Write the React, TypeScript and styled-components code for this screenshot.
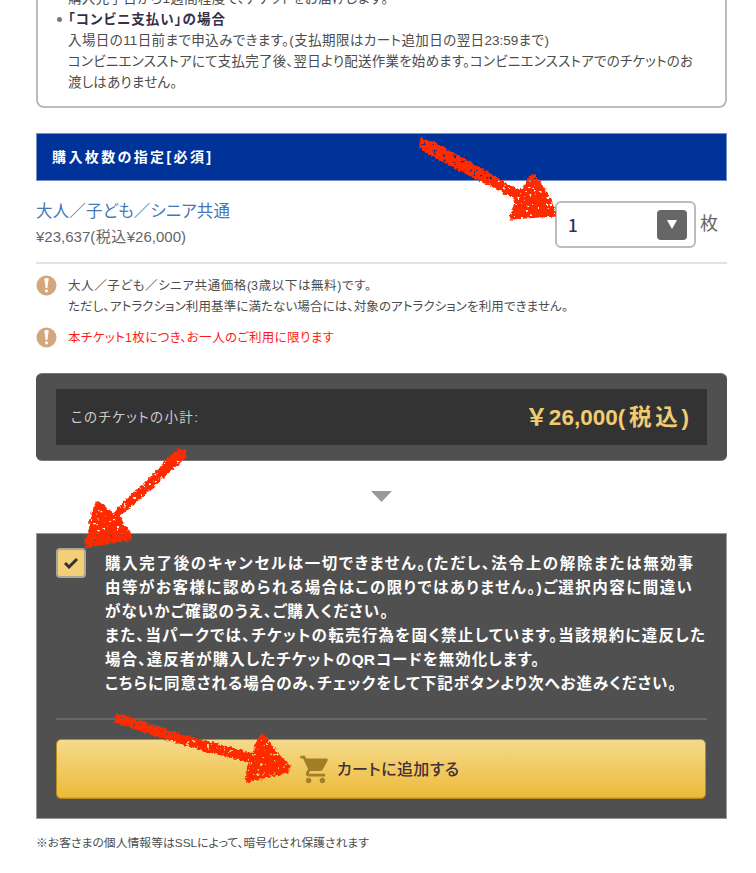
import React from 'react';
import styled, { createGlobalStyle, css } from 'styled-components';
import { MdShoppingCart } from 'react-icons/md';

const GlobalStyle = createGlobalStyle`
  *, *::before, *::after { box-sizing: border-box; }
  body {
    margin: 0;
    background: #fff;
    color: #4c4c4c;
    font-family: "Liberation Sans", "Noto Sans CJK JP", sans-serif;
    font-size: 13.5px;
    line-height: 21px;
  }
`;

const Page = styled.main`
  position: relative;
  width: 756px;
  height: 873px;
  padding: 0 29px 0 36px;
  overflow: hidden;
`;

/* One typeset line, spread evenly over its measure. */
const Line = styled.span<{ $w: number; $bold?: boolean }>`
  display: block;
  width: ${(p) => p.$w}px;
  white-space: nowrap;
  text-align: justify;
  text-align-last: justify;
  font-feature-settings: 'palt' 1;
  ${(p) => p.$bold && css`font-weight: 700;`}
`;

const PaymentBox = styled.section`
  height: 120px;
  margin-top: -12px;
  padding-left: 30px;
  border: 2px solid #bbb;
  border-top: 0;
  border-radius: 0 0 8px 8px;
`;

const PaymentTitle = styled.h3`
  display: flex;
  align-items: center;
  gap: 6px;
  margin: 0 0 0 -11px;
  font-size: inherit;
  color: #35304a;
  &::before {
    content: '';
    width: 5px;
    height: 5px;
    border-radius: 50%;
    background: #777;
  }
`;

const SectionHeader = styled.h2`
  display: flex;
  align-items: center;
  height: 48px;
  margin: 25px 0 0;
  padding: 1px 0 0 15px;
  border: 1px solid #7590c8;
  background: #039;
  color: #fff;
  font-size: 14px;
`;

const TicketRow = styled.section`
  display: flex;
  justify-content: space-between;
  height: 83px;
  padding-top: 20px;
  border-bottom: 2px solid #e2e2e2;
`;

const TicketName = styled.div`
  margin-top: -3px;
  color: #4577b8;
  font-size: 16.5px;
  line-height: 26px;
`;

const TicketPrice = styled.div`
  color: #666;
  font-size: 15px;
  line-height: 26px;
`;

const Quantity = styled.div`
  display: flex;
  align-items: center;
  gap: 4px;
  width: 172px;
  height: 47px;
  color: #666;
  font-size: 18px;
`;

const Select = styled.button`
  display: flex;
  align-items: center;
  justify-content: space-between;
  width: 141px;
  height: 47px;
  padding: 0 7px 0 11px;
  border: 2px solid #bbb;
  border-radius: 6px;
  background: #fff;
  color: #35304a;
  font: 500 17px "Noto Sans CJK JP", sans-serif;
`;

const SelectArrow = styled.span`
  display: grid;
  place-items: center;
  width: 30px;
  height: 30px;
  border-radius: 4px;
  background: #666;
`;

const Notes = styled.ul`
  display: grid;
  gap: 10px;
  margin: 0;
  padding: 11px 0 0;
  list-style: none;
  font-size: 12.5px;
  line-height: 20.5px;
`;

const Note = styled.li<{ $alert?: boolean }>`
  display: flex;
  gap: 11px;
  color: ${(p) => (p.$alert ? '#ff1a1a' : '#4c4c4c')};
`;

const NoteText = styled.div`
  padding-top: 1px;
`;

const Subtotal = styled.section`
  height: 88px;
  margin-top: 24px;
  padding: 16px 20px;
  border: 1px solid #777;
  border-width: 1px 0;
  border-radius: 6px;
  background: #505050;
`;

const SubtotalInner = styled.div`
  display: flex;
  align-items: center;
  justify-content: space-between;
  height: 56px;
  margin-top: -1px;
  padding: 2px 18px 0 15px;
  background: #333;
  color: #ccc;
`;

const Amount = styled.strong`
  color: #f1cc72;
  font-size: 22.5px;
  line-height: 30px;
`;

const DownMark = styled.div`
  display: flex;
  justify-content: center;
  height: 72px;
  padding-top: 30px;
`;

const Agreement = styled.section`
  height: 286px;
  padding: 14px 19px 0;
  border: 1px solid #999;
  background: #505050;
`;

const Consent = styled.label`
  display: flex;
  gap: 19px;
  height: 172px;
  border-bottom: 2px solid #686868;
  color: #fff;
  font-size: 15.5px;
  line-height: 24.1px;
`;

const ConsentText = styled.div`
  padding-top: 4px;
`;

const CheckBox = styled.span`
  display: grid;
  place-items: center;
  width: 30px;
  height: 30px;
  border: 2px solid #aaa69a;
  border-radius: 4px;
  background: #f3d078;
`;

const CartButton = styled.button`
  display: flex;
  align-items: center;
  justify-content: center;
  gap: 5px;
  width: 650px;
  height: 60px;
  margin-top: 19px;
  padding: 2px 4px 0 0;
  border: 1px solid #b68b20;
  border-radius: 5px;
  background: linear-gradient(#f4da8d, #edba37);
  box-shadow: inset 0 -1px 0 #d9a52c;
  color: #433038;
  font: 500 16px/24px "Noto Sans CJK JP", sans-serif;
`;

const CartLabel = styled.span`
  padding-bottom: 4px;
`;

const Footnote = styled.p`
  margin: 14px 0 0;
  font-size: 11.8px;
`;

const Annotations = styled.svg`
  position: absolute;
  inset: 0;
  pointer-events: none;
`;

const WarnIcon = () => (
  <svg width="21" height="21" viewBox="0 0 21 21">
    <circle cx="10.5" cy="10.5" r="10" fill="#d3a77c" />
    <path d="M8.3 3.5q2.2-1.2 4.4 0L11.4 13H9.6z" fill="#fff" />
    <circle cx="10.5" cy="15.8" r="1.6" fill="#fff" />
  </svg>
);

const arrows = [
  'M421 139L435 143L476 166L519 191L525 186L529 177L535 175L545 190L555 209L555 216L536 217L510 219L511 212L516 203L515 198L479 180L437 158L420 148Z',
  'M178 450L185 451L186 456L177 465L162 478L146 493L119 516L124 525L131 533L131 539L115 542L86 547L85 542L90 528L90 520L97 501L105 507L114 514L127 499L148 480L169 458Z',
  'M117 714L127 717L172 732L253 754L256 743L262 734L268 740L276 752L290 767L288 772L270 776L246 782L246 775L251 762L202 750L164 738L115 722Z',
];

const consentLines: [string, number][] = [
  ['購入完了後のキャンセルは一切できません。(ただし、法令上の解除または無効事', 588],
  ['由等がお客様に認められる場合はこの限りではありません。)ご選択内容に間違い', 587],
  ['がないかご確認のうえ、ご購入ください。', 283],
  ['また、当パークでは、チケットの転売行為を固く禁止しています。当該規約に違反した', 600],
  ['場合、違反者が購入したチケットのQRコードを無効化します。', 434],
  ['こちらに同意される場合のみ、チェックをして下記ボタンより次へお進みください。', 571],
];

export default function App() {
  return (
    <Page>
      <GlobalStyle />
      <PaymentBox>
        <Line $w={320}>購入完了日から1週間程度で、チケットをお届けします。</Line>
        <PaymentTitle><Line $w={157} $bold>「コンビニ支払い」の場合</Line></PaymentTitle>
        <Line $w={481}>入場日の11日前まで申込みできます。(支払期限はカート追加日の翌日23:59まで)</Line>
        <Line $w={625}>コンビニエンスストアにて支払完了後、翌日より配送作業を始めます。コンビニエンスストアでのチケットのお</Line>
        <Line $w={109}>渡しはありません。</Line>
      </PaymentBox>

      <SectionHeader><Line $w={159}>購入枚数の指定[必須]</Line></SectionHeader>

      <TicketRow>
        <div>
          <TicketName><Line $w={194}>大人／子ども／シニア共通</Line></TicketName>
          <TicketPrice><Line $w={150}>¥23,637(税込¥26,000)</Line></TicketPrice>
        </div>
        <Quantity>
          <Select>
            1
            <SelectArrow>
              <svg width="10" height="9" viewBox="0 0 10 9"><path d="M0 0h10L5 9z" fill="#fff" /></svg>
            </SelectArrow>
          </Select>
          枚
        </Quantity>
      </TicketRow>

      <Notes>
        <Note>
          <WarnIcon />
          <NoteText>
            <Line $w={303}>大人／子ども／シニア共通価格(3歳以下は無料)です。</Line>
            <Line $w={500}>ただし、アトラクション利用基準に満たない場合には、対象のアトラクションを利用できません。</Line>
          </NoteText>
        </Note>
        <Note $alert>
          <WarnIcon />
          <NoteText>
            <Line $w={266}>本チケット1枚につき、お一人のご利用に限ります</Line>
          </NoteText>
        </Note>
      </Notes>

      <Subtotal>
        <SubtotalInner>
          <Line $w={127}>このチケットの小計:</Line>
          <Amount><Line $w={161}>￥26,000(税込)</Line></Amount>
        </SubtotalInner>
      </Subtotal>

      <DownMark>
        <svg width="21" height="11" viewBox="0 0 21 11"><path d="M0 0h21L10.5 11z" fill="#999" /></svg>
      </DownMark>

      <Agreement>
        <Consent>
          <CheckBox>
            <svg width="14" height="12" viewBox="0 0 14 12">
              <path d="M1 6l4 4 8-8" fill="none" stroke="#333" strokeWidth="3" />
            </svg>
          </CheckBox>
          <ConsentText>
            {consentLines.map(([text, w]) => <Line key={text} $w={w} $bold>{text}</Line>)}
          </ConsentText>
        </Consent>
        <CartButton>
          <MdShoppingCart size={33} color="#a07f26" />
          <CartLabel><Line $w={122}>カートに追加する</Line></CartLabel>
        </CartButton>
      </Agreement>

      <Footnote><Line $w={333}>※お客さまの個人情報等はSSLによって、暗号化され保護されます</Line></Footnote>

      <Annotations width="756" height="873">
        <defs>
          <filter id="crayon" x="-10%" y="-10%" width="120%" height="120%">
            <feTurbulence type="fractalNoise" baseFrequency="0.3" numOctaves="2" seed="4" result="grain" />
            <feDisplacementMap in="SourceGraphic" in2="grain" scale="5" xChannelSelector="R" yChannelSelector="G" result="rough" />
            <feColorMatrix in="grain" type="matrix" values="0 0 0 0 0  0 0 0 0 0  0 0 0 0 0  0 0 -14 0 10.3" result="mask" />
            <feComposite in="rough" in2="mask" operator="in" />
          </filter>
        </defs>
        {arrows.map((d) => (
          <path key={d} d={d} fill="#ff2a00" stroke="#ff2a00" strokeWidth="1.5" strokeLinejoin="round" filter="url(#crayon)" />
        ))}
      </Annotations>
    </Page>
  );
}
